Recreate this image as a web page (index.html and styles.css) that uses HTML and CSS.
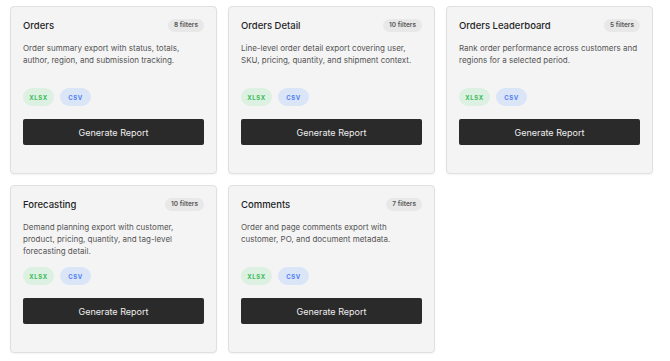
FILE: index.html
```html
<!DOCTYPE html>
<html lang="en">
<head>
    <meta charset="UTF-8">
    <meta name="viewport" content="width=device-width, initial-scale=1.0">
    <title>Reports</title>
    <link rel="stylesheet" href="styles.css">
</head>
<body>
<div class="reports">
    <div class="card">
        <div class="card-head">
            <h3 class="title">Orders</h3>
            <span class="count">8 filters</span>
        </div>
        <p class="desc">Order summary export with status, totals, author, region, and submission tracking.</p>
        <div class="formats">
            <span class="format xlsx">XLSX</span>
            <span class="format csv">CSV</span>
        </div>
        <button class="generate">Generate Report</button>
    </div>

    <div class="card">
        <div class="card-head">
            <h3 class="title">Orders Detail</h3>
            <span class="count">10 filters</span>
        </div>
        <p class="desc">Line-level order detail export covering user, SKU, pricing, quantity, and shipment context.</p>
        <div class="formats">
            <span class="format xlsx">XLSX</span>
            <span class="format csv">CSV</span>
        </div>
        <button class="generate">Generate Report</button>
    </div>

    <div class="card">
        <div class="card-head">
            <h3 class="title">Orders Leaderboard</h3>
            <span class="count">5 filters</span>
        </div>
        <p class="desc">Rank order performance across customers and regions for a selected period.</p>
        <div class="formats">
            <span class="format xlsx">XLSX</span>
            <span class="format csv">CSV</span>
        </div>
        <button class="generate">Generate Report</button>
    </div>

    <div class="card">
        <div class="card-head">
            <h3 class="title">Forecasting</h3>
            <span class="count">10 filters</span>
        </div>
        <p class="desc">Demand planning export with customer, product, pricing, quantity, and tag-level forecasting detail.</p>
        <div class="formats">
            <span class="format xlsx">XLSX</span>
            <span class="format csv">CSV</span>
        </div>
        <button class="generate">Generate Report</button>
    </div>

    <div class="card">
        <div class="card-head">
            <h3 class="title">Comments</h3>
            <span class="count">7 filters</span>
        </div>
        <p class="desc">Order and page comments export with customer, PO, and document metadata.</p>
        <div class="formats">
            <span class="format xlsx">XLSX</span>
            <span class="format csv">CSV</span>
        </div>
        <button class="generate">Generate Report</button>
    </div>
</div>
</body>
</html>
```

FILE: styles.css
```css
body {
    font-family: Inter, "Noto Sans", sans-serif;
    margin: 0;
    background-color: #fff;
    color: #222;
}

.reports {
    display: grid;
    grid-template-columns: repeat(3, 207px);
    column-gap: 11px;
    row-gap: 11px;
    padding: 6px 10px;
}

.card {
    background-color: #f4f4f4;
    border: 1px solid #e0e0e0;
    border-radius: 4px;
    box-shadow: 0 1px 2px rgba(0, 0, 0, 0.05);
    padding: 12px 12px 28px;
}

.card-head {
    display: flex;
    justify-content: space-between;
    align-items: center;
    height: 13px;
}

.title {
    margin: 0;
    font-size: 9.5px;
    font-weight: 500;
    color: #1f1f1f;
}

.count {
    background-color: #e8e8e8;
    color: #555;
    border-radius: 7px;
    font-size: 6.5px;
    font-weight: 600;
    padding: 0 6px;
    height: 13px;
    line-height: 13px;
}

.desc {
    margin: 10px 0 0;
    font-size: 8px;
    line-height: 12px;
    color: #555;
    min-height: 36px;
}

.formats {
    display: flex;
    gap: 6px;
    margin-top: 10px;
}

.format {
    width: 31px;
    height: 18px;
    border-radius: 9px;
    display: flex;
    justify-content: center;
    align-items: center;
    font-size: 6px;
    font-weight: 700;
    letter-spacing: 0.6px;
}

.xlsx {
    background-color: #dcf1e1;
    color: #3dbb5b;
}

.csv {
    background-color: #dbe5f8;
    color: #4f7ff0;
}

.generate {
    display: block;
    width: 100%;
    height: 26px;
    margin-top: 13px;
    border: none;
    border-radius: 2px;
    background-color: #2a2a2a;
    color: #eee;
    font-family: Inter, "Noto Sans", sans-serif;
    font-size: 9px;
    cursor: pointer;
}

.generate:hover {
    opacity: 0.9;
}
```
